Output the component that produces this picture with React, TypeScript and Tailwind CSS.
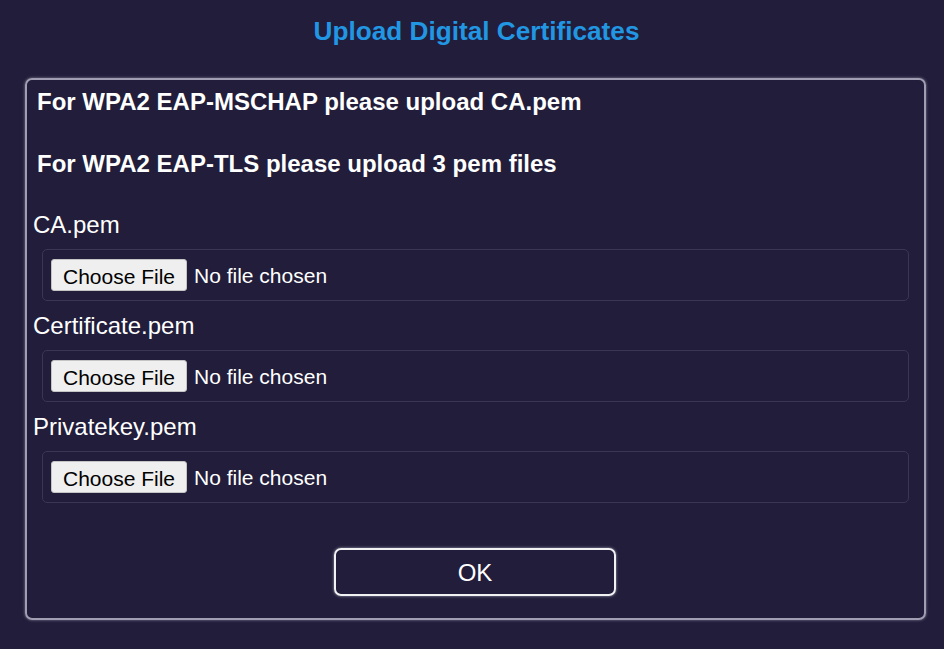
export default function App() {
  const files = ["CA.pem", "Certificate.pem", "Privatekey.pem"];

  return (
    <div className="min-h-[649px] w-[944px] bg-[#211d3a] pt-[17px] pl-[9px] font-['Liberation_Sans',Arial,sans-serif] text-white">
      <h1 className="text-center text-[26.2px] font-bold leading-[28px] text-[#2196e2]">
        Upload Digital Certificates
      </h1>

      <div className="ml-[16px] mt-[33px] w-[901px] rounded-[7px] border-2 border-[#a19eb3] pt-[8px] pb-[22px] shadow-[0_0_3px_rgba(200,200,220,0.6)]">
        <h2 className="pl-[10px] text-[24px] font-bold leading-[28px]">
          For WPA2 EAP-MSCHAP please upload CA.pem
        </h2>
        <h2 className="mt-[34px] pl-[10px] text-[24px] font-bold leading-[28px]">
          For WPA2 EAP-TLS please upload 3 pem files
        </h2>

        <div className="mt-[33px] flex flex-col">
          {files.map((name, i) => (
            <div key={name} className={i > 0 ? "mt-[11px]" : ""}>
              <label className="block pl-[6px] text-[24px] leading-[28px]">{name}</label>
              <div className="mx-[15px] mt-[10px] flex h-[52px] items-center gap-[7px] rounded-[5px] border border-[#3a3653] px-[8px]">
                <button className="h-[32px] w-[136px] rounded-[3px] border border-[#c4c4c4] bg-[#efefef] pt-[2px] text-[21px] leading-none text-black">
                  Choose File
                </button>
                <span className="pt-[2px] text-[21px]">No file chosen</span>
              </div>
            </div>
          ))}
        </div>

        <div className="mt-[45px] flex pl-[307px]">
          <button className="h-[48px] w-[282px] rounded-[7px] border-2 border-[#f2f2f2] pt-[1px] text-[24px] shadow-[0_0_3px_rgba(220,220,240,0.7)]">
            OK
          </button>
        </div>
      </div>
    </div>
  );
}
